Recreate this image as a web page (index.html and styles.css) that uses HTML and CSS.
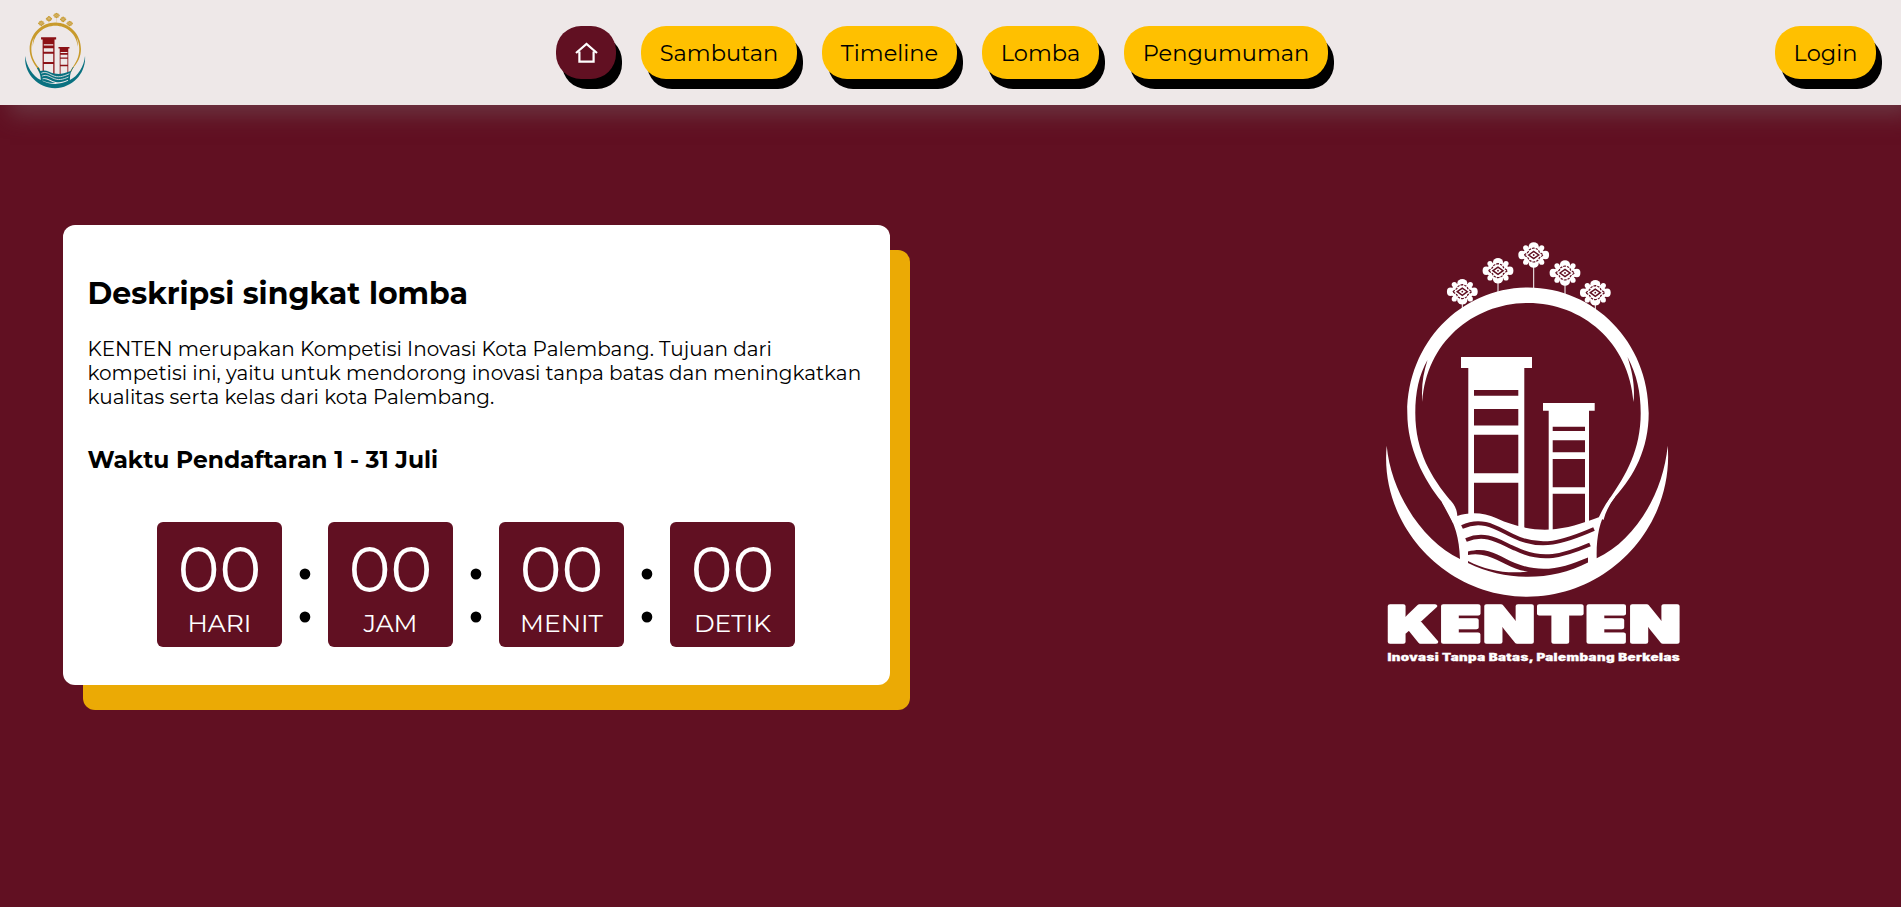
FILE: index.html
```html
<!DOCTYPE html>
<html lang="id">
<head>
<meta charset="utf-8">
<title>KENTEN</title>
<link rel="stylesheet" href="styles.css">
</head>
<body>
<svg class="defs" aria-hidden="true">
  <symbol id="flower" viewBox="-16 -14 32 28">
    <g class="petal">
      <ellipse cx="0" cy="0" rx="11" ry="9"/>
      <ellipse cx="0" cy="-8.7" rx="5" ry="4"/><ellipse cx="0" cy="8.7" rx="5" ry="4"/>
      <ellipse cx="-11.8" cy="0" rx="3.6" ry="4.2"/><ellipse cx="11.8" cy="0" rx="3.6" ry="4.2"/>
      <circle cx="-8" cy="-7.200" r="2.6"/><circle cx="8" cy="-7.200" r="2.6"/>
      <circle cx="-8" cy="7.200" r="2.6"/><circle cx="8" cy="7.200" r="2.6"/>
    </g>
    <path class="cut-line" stroke-width="1.2" stroke-dasharray="2.5 1" d="M-9.500 0L-5.500-3Q-5-6 0-7Q5-6 5.500-3L9.500 0L5.500 3Q5 6 0 7Q-5 6-5.500 3Z"/>
    <path class="cut-line" stroke-width="1.500" d="M-5 0L0-3.600L5 0L0 3.600Z"/>
    <circle class="cut" r=".9"/>
  </symbol>
  <symbol id="emblem" viewBox="1370 229 395 395">
    <path class="stem" d="M1462.300 300v10M1498 280v14M1533.700 265v24M1565 283v12M1595.300 302v10"/>
    <use href="#flower" x="1446.300" y="277.700" width="32" height="28"/>
    <use href="#flower" x="1482" y="256.700" width="32" height="28"/>
    <use href="#flower" x="1517.700" y="241" width="32" height="28"/>
    <use href="#flower" x="1549" y="259" width="32" height="28"/>
    <use href="#flower" x="1579.300" y="278.700" width="32" height="28"/>
    <path class="ring" d="M1457.300 516C1457 508 1453 503 1450 500C1432 478 1415.300 452 1415.300 413C1415.300 392 1419 375 1427.500 360C1423 374 1421 388 1422.500 402C1426 342 1474 303 1528 303C1582 303 1629 342 1633.500 402C1635 388 1633 374 1627.500 357C1637 375 1640.700 392 1640.700 413C1640.700 450 1626 475 1610 498Q1604 506 1599 517L1603.500 520Q1607 507 1615 497C1634 476 1648.700 449 1648.700 413C1648.700 342 1594 287.500 1528 287.500C1462 287.500 1407.300 342 1407.300 413C1407.300 448 1424 480 1441.700 501.700L1453 523Z"/>
    <g class="tower">
      <path fill-rule="evenodd" d="M1461 357H1532V368H1524.300V530H1518.300V482.700H1474V516H1468.300V368H1461ZM1474 390V395.700H1518.300V390ZM1474 409V425.500H1518.300V409ZM1474 434.700V473.300H1518.300V434.700Z"/>
      <path fill-rule="evenodd" d="M1543 403H1594.700V410.700H1589V526H1585V493.700H1552.700V532H1548.700V410.700H1543ZM1552.700 426.700V431H1585V426.700ZM1552.700 440.300V452.300H1585V440.300ZM1552.700 459V487.300H1585V459Z"/>
    </g>
    <g class="water">
      <path d="M1386.700 445.700C1391 493 1423 542 1460 559C1459 535 1454 521 1441.700 501.700L1450 500L1457.300 516C1468 512 1484 512 1496 518C1520 529 1540 531 1556 529C1573 527 1588 521 1600 516.700L1610 498L1615 497C1601 514 1596 533 1596.700 558.300C1634 541 1663 495 1667.700 445.700C1674 524 1611 596.700 1527 596.700C1444 596.700 1379 524 1386.700 445.700Z"/>
      <path class="cut-line" stroke-width="4" d="M1462 527C1483 517 1498 529 1513 536C1541 550 1564 542 1594 529M1466 540C1487 531 1501 543 1516 549C1542 562 1563 556 1590 544.500"/>
      <path class="cut" d="M1468 551.500C1488 546 1499 556 1515 563C1542 574 1563 568 1588 557.500V562.500C1552 581 1507 582 1468 563V561C1487 571 1508 574 1528 571.500C1512 570 1501 560 1487 556Q1477 553 1468 555Z"/>
    </g>
  </symbol>
</svg>

<header class="header">
  <svg class="brand" viewBox="1370 229 395 395" role="img" aria-label="Kenten"><use href="#emblem" x="1354.500" y="224" width="395" height="395"/></svg>
  <nav class="nav">
    <a class="pill home" href="#" aria-label="Beranda">
      <svg width="24" height="24" viewBox="0 0 24 24"><path d="M5.400 10.500V20.700H19.600V10.500M2 12L12.500 3L23 12"/></svg>
    </a>
    <a class="pill sambutan" href="#">Sambutan</a>
    <a class="pill timeline" href="#">Timeline</a>
    <a class="pill lomba" href="#">Lomba</a>
    <a class="pill pengumuman" href="#">Pengumuman</a>
  </nav>
  <a class="pill login" href="#">Login</a>
</header>

<main class="hero">
  <section class="card">
    <h2>Deskripsi singkat lomba</h2>
    <p>KENTEN merupakan Kompetisi Inovasi Kota Palembang. Tujuan dari kompetisi ini, yaitu untuk mendorong inovasi tanpa batas dan meningkatkan kualitas serta kelas dari kota Palembang.</p>
    <h3>Waktu Pendaftaran 1 - 31 Juli</h3>
    <div class="countdown">
      <div class="unit"><span class="value">00</span><span class="label">HARI</span></div>
      <span class="colon">:</span>
      <div class="unit"><span class="value">00</span><span class="label">JAM</span></div>
      <span class="colon">:</span>
      <div class="unit"><span class="value">00</span><span class="label">MENIT</span></div>
      <span class="colon">:</span>
      <div class="unit"><span class="value">00</span><span class="label">DETIK</span></div>
    </div>
  </section>
  <svg class="logo" viewBox="1370 229 395 441">
    <use href="#emblem" x="1370" y="229" width="395" height="395"/>
    <text class="name" x="1387" y="642" textLength="296" lengthAdjust="spacingAndGlyphs">KENTEN</text>
    <text class="tagline" x="1387.500" y="660.500" textLength="292.500" lengthAdjust="spacingAndGlyphs">Inovasi Tanpa Batas, Palembang Berkelas</text>
  </svg>
</main>
</body>
</html>
```

FILE: styles.css
```css
:root {
  --maroon: #611022;
  --cut: var(--maroon);
}

* { box-sizing: border-box; }

body {
  margin: 0;
  min-height: 907px;
  overflow: hidden;
  background: var(--maroon);
  color: #000;
  font-family: Montserrat, Inter, sans-serif;
  font-size: 20px;
}

.defs { position: absolute; width: 0; height: 0; }

.header {
  display: flex;
  align-items: center;
  justify-content: space-between;
  height: 105px;
  padding: 0 25px;
  background: #eee8e8;
  box-shadow: 10px 10px 20px #6b3440;
}

.brand {
  --cut: #eee8e8;
  --ring: #c89a2b;
  --tower: #8b1116;
  --water: #0a7180;
  width: 84px;
  height: 84px;
}
.logo { --ring: #fff; --tower: #fff; --water: #fff; }
.ring, .petal { fill: var(--ring); }
.stem { stroke: var(--ring); }
.tower { fill: var(--tower); }
.water { fill: var(--water); }
.cut { fill: var(--cut); }
.cut-line { fill: none; stroke: var(--cut); }

.nav { display: flex; gap: 25px; }

.pill {
  display: flex;
  align-items: center;
  justify-content: center;
  height: 53px;
  border-radius: 25px;
  background: #ffc000;
  box-shadow: 6px 10px 0 #000;
  color: #000;
  font-size: 22.500px;
  text-decoration: none;
  white-space: nowrap;
}
.home { width: 60px; background: var(--maroon); }
.home path { fill: none; stroke: #fff; stroke-width: 2.200; }
.sambutan { width: 156px; }
.timeline { width: 135px; }
.lomba { width: 117px; }
.pengumuman { width: 204px; }
.login { width: 101px; }

.hero {
  display: flex;
  align-items: flex-start;
  padding: 120px 63px 0;
}

.card {
  width: 827px;
  height: 460px;
  padding: 50px 25px 0 24.500px;
  border-radius: 12px;
  background: #fff;
  box-shadow: 20px 25px 0 #ebaa05;
}
.card h2 { margin: 0 0 25px; font-size: 30px; line-height: 37px; }
.card p { margin: 0; line-height: 24px; }
.card h3 { margin: 36px 0 0; font-size: 23.400px; line-height: 30px; }

.countdown {
  display: flex;
  height: 125px;
  margin: 47px 0 0 69.500px;
}
.unit {
  display: flex;
  flex-direction: column;
  align-items: center;
  width: 125px;
  border-radius: 6px;
  background: var(--maroon);
  color: #fff;
}
.value { margin-top: 9px; font-size: 63px; line-height: 77px; }
.label { font-size: 25px; line-height: 30px; }
.colon {
  width: 46px;
  font-size: 101px;
  line-height: 128px;
  text-align: center;
}

.logo { width: 395px; height: 441px; margin: 4px 0 0 480px; }
.logo text { fill: #fff; font-family: Inter, sans-serif; font-weight: 900; }
.name {
  font-size: 49px;
  letter-spacing: 2px;
  stroke: #fff;
  stroke-width: 3.400;
  stroke-linejoin: round;
}
.tagline { font-size: 10px; letter-spacing: .3px; stroke: #fff; stroke-width: .3; }
```
